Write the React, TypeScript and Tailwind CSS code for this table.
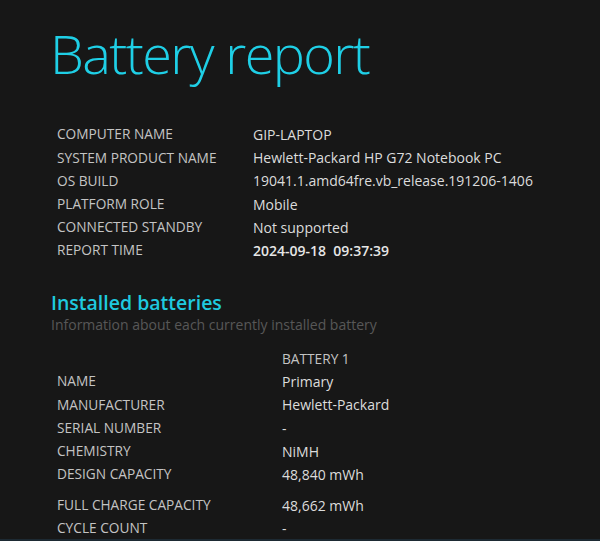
const systemRows = [
  ["COMPUTER NAME", "GIP-LAPTOP"],
  ["SYSTEM PRODUCT NAME", "Hewlett-Packard HP G72 Notebook PC"],
  ["OS BUILD", "19041.1.amd64fre.vb_release.191206-1406"],
  ["PLATFORM ROLE", "Mobile"],
  ["CONNECTED STANDBY", "Not supported"],
  ["REPORT TIME", "2024-09-18\u00a0\u00a009:37:39"],
];

const batteryRows = [
  ["NAME", "Primary", "h-[23px]"],
  ["MANUFACTURER", "Hewlett-Packard", "h-[23.5px]"],
  ["SERIAL NUMBER", "-", "h-[23px]"],
  ["CHEMISTRY", "NiMH", "h-[23px]"],
  ["DESIGN CAPACITY", "48,840 mWh", "h-[23px] mb-[8px]"],
  ["FULL CHARGE CAPACITY", "48,662 mWh", "h-[23px]"],
  ["CYCLE COUNT", "-", "h-[23px]"],
];

function App() {
  return (
    <div className="flex h-[541px] w-[600px] flex-col overflow-hidden bg-[#171717] font-['Open_Sans',sans-serif]">
      <div className="flex-1 overflow-hidden">
        <h1 className="ml-[50px] mt-[17px] text-[54px] font-light leading-[72px] tracking-[-1.6px] text-[#1fcfe6]">
          Battery report
        </h1>

        <div className="ml-[57px] mt-[34px]">
          {systemRows.map(([label, value], i) => (
            <div key={label} className="flex h-[23.2px] items-center">
              <span className="w-[196px] text-[13.7px] text-[#c4c4c4]">{label}</span>
              <span
                className={
                  i === systemRows.length - 1
                    ? "text-[14px] font-semibold text-[#e6e6e6]"
                    : "text-[14px] text-[#dcdcdc]"
                }
              >
                {value}
              </span>
            </div>
          ))}
        </div>

        <h2 className="ml-[51px] mt-[28px] text-[19.5px] font-semibold leading-[25px] text-[#1fc9df]">
          Installed batteries
        </h2>
        <p className="ml-[51px] text-[14px] leading-[20px] text-[#575757]">
          Information about each currently installed battery
        </p>

        <div className="ml-[57px] mt-[13px]">
          <div className="flex h-[22px] items-center">
            <span className="w-[225px]" />
            <span className="text-[13.7px] text-[#c4c4c4]">BATTERY 1</span>
          </div>
          {batteryRows.map(([label, value, h]) => (
            <div key={label} className={`flex items-center ${h}`}>
              <span className="w-[225px] text-[13.7px] text-[#c4c4c4]">{label}</span>
              <span className="text-[14px] text-[#dcdcdc]">{value}</span>
            </div>
          ))}
        </div>
      </div>
      <div className="h-[2px] bg-[#1d2a33]" />
    </div>
  );
}

export default App;
